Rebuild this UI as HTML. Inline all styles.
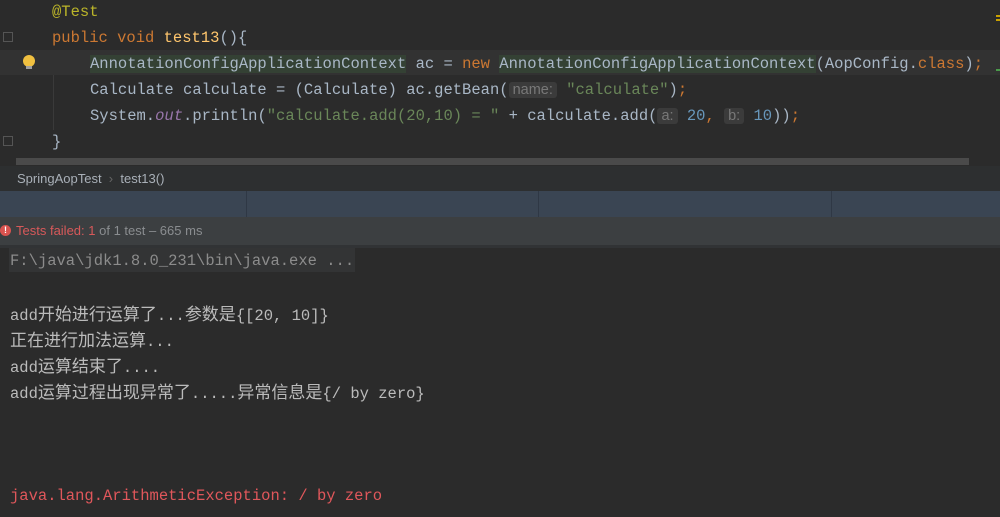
<!DOCTYPE html>
<html><head><meta charset="utf-8"><style>
*{margin:0;padding:0;box-sizing:border-box}
body{width:1000px;height:517px;overflow:hidden;background:#2b2b2b;position:relative;font-family:"Liberation Mono","Noto Sans CJK SC",monospace;font-size:15.5px}
.l{position:absolute;white-space:pre;color:#a9b7c6;line-height:20px}
.k{color:#cc7832}.an{color:#bbb529}.fn{color:#ffc66d}.s{color:#6a8759}.n{color:#6897bb}.o{color:#9876aa;font-style:italic}
.h{background:#344134}
.c{font-size:17px;font-family:"Noto Sans CJK SC",sans-serif;line-height:20px}
.hint{background:#3b3b3b;color:#787878;border-radius:3px;padding:0 4px;font-family:"Liberation Sans",sans-serif;font-size:14.5px}
.ui{font-family:"Liberation Sans",sans-serif;font-size:13px;position:absolute;white-space:pre}
</style></head><body>
<div style="position:absolute;left:0;top:50px;width:1000px;height:25px;background:#323232"></div>
<div style="position:absolute;left:53px;top:75px;width:1px;height:55px;background:#3a3a3a"></div>
<div class="l an" style="left:52px;top:2px">@Test</div>
<div class="l" style="left:52px;top:28px"><span class="k">public void </span><span class="fn">test13</span>(){</div>
<div class="l" style="left:90px;top:54px"><span class="h">AnnotationConfigApplicationContext</span> ac = <span class="k">new </span><span class="h">AnnotationConfigApplicationContext</span>(AopConfig.<span class="k">class</span>)<span class="k">;</span></div>
<div class="l" style="left:90px;top:80px">Calculate calculate = (Calculate) ac.getBean(<span class="hint">name:</span> <span class="s">"calculate"</span>)<span class="k">;</span></div>
<div class="l" style="left:90px;top:106px">System.<span class="o">out</span>.println(<span class="s">"calculate.add(20,10) = "</span> + calculate.add(<span class="hint">a:</span> <span class="n">20</span><span class="k">,</span> <span class="hint">b:</span> <span class="n">10</span>))<span class="k">;</span></div>
<div class="l" style="left:52px;top:132px">}</div>
<div style="position:absolute;left:23px;top:55px;width:12px;height:12px;border-radius:50%;background:#f0c040"></div>
<div style="position:absolute;left:26px;top:66px;width:6px;height:3px;background:#a0a0a0"></div>
<div style="position:absolute;left:3px;top:32px;width:10px;height:10px;border:1px solid #555"></div>
<div style="position:absolute;left:3px;top:136px;width:10px;height:10px;border:1px solid #555"></div>
<div style="position:absolute;left:16px;top:158px;width:953px;height:7px;background:#4a4a4a"></div>
<div style="position:absolute;left:996px;top:15px;width:4px;height:2px;background:#c8a000;box-shadow:0 4px #c8a000"></div>
<div style="position:absolute;left:996px;top:69px;width:4px;height:2px;background:#4a9a4a"></div>
<div style="position:absolute;left:0;top:166px;width:1000px;height:25px;background:#2d2f30"></div>
<div class="ui" style="left:17px;top:171px;color:#a9b0b8">SpringAopTest  <span style="color:#666">›</span>  test13()</div>
<div style="position:absolute;left:0;top:191px;width:1000px;height:26px;background:#3a4553"></div>
<div style="position:absolute;left:246px;top:191px;width:1px;height:26px;background:#2f3845"></div>
<div style="position:absolute;left:538px;top:191px;width:1px;height:26px;background:#2f3845"></div>
<div style="position:absolute;left:831px;top:191px;width:1px;height:26px;background:#2f3845"></div>
<div style="position:absolute;left:0;top:217px;width:1000px;height:28px;background:#3c3f41"></div>
<div style="position:absolute;left:0;top:225px;width:11px;height:11px;border-radius:50%;background:#d9534f;color:#fff;font:bold 9px 'Liberation Sans';text-align:center;line-height:11px">!</div>
<div class="ui" style="left:16px;top:223px;color:#d7595a">Tests failed: 1 <span style="color:#8a8d90">of 1 test – 665 ms</span></div>
<div style="position:absolute;left:0;top:245px;width:1000px;height:3px;background:#313335"></div>
<div style="position:absolute;left:9px;top:248px;width:346px;height:24px;background:#333435"></div>
<div class="l" style="left:10px;top:251px;color:#8c8c8c">F:\java\jdk1.8.0_231\bin\java.exe ...</div>
<div class="l" style="left:10px;top:303px;color:#bbb">add<span class="c">开始进行运算了</span>...<span class="c">参数是</span>{[20, 10]}</div>
<div class="l" style="left:10px;top:329px;color:#bbb"><span class="c">正在进行加法运算</span>...</div>
<div class="l" style="left:10px;top:355px;color:#bbb">add<span class="c">运算结束了</span>....</div>
<div class="l" style="left:10px;top:381px;color:#bbb">add<span class="c">运算过程出现异常了</span>.....<span class="c">异常信息是</span>{/ by zero}</div>
<div class="l" style="left:10px;top:486px;color:#e0575b">java.lang.ArithmeticException: / by zero</div>
</body></html>
